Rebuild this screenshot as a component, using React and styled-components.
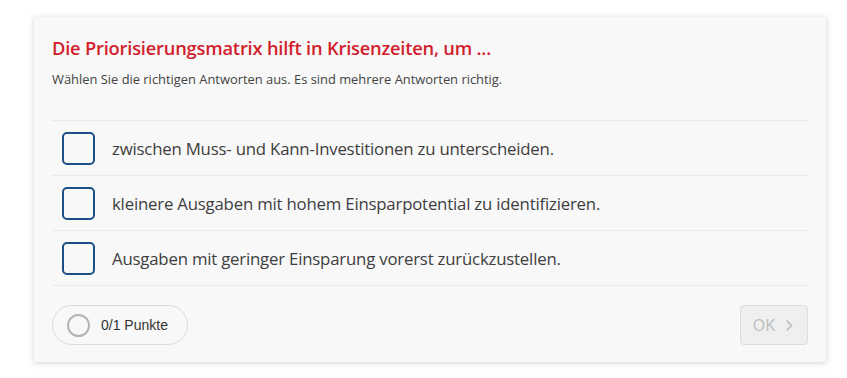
import React from 'react';
import styled, { createGlobalStyle } from 'styled-components';

const GlobalStyle = createGlobalStyle`
  html, body {
    margin: 0;
    padding: 0;
    background: #ffffff;
  }
  * { box-sizing: border-box; }
`;

const Page = styled.div`
  padding: 17px 21px 16px 34px;
`;

const Card = styled.div`
  background: #f8f8f8;
  box-shadow: 0 1px 6px rgba(0, 0, 0, 0.18);
  padding: 20px 18px 17px 18px;
  font-family: 'Open Sans', 'Noto Sans', sans-serif;
`;

const Title = styled.h2`
  margin: 0;
  font-size: 18.3px;
  font-weight: 600;
  color: #d2202b;
  line-height: 22px;
  letter-spacing: -0.2px;
`;

const Hint = styled.p`
  margin: 12px 0 0 0;
  font-size: 12.9px;
  color: #444;
  line-height: 16px;
`;

const Options = styled.ul`
  list-style: none;
  margin: 33px 0 0 0;
  padding: 0;
  border-top: 1px solid #e9e9e9;
`;

const Option = styled.li`
  display: flex;
  align-items: center;
  gap: 17px;
  height: 55px;
  padding-left: 10px;
  border-bottom: 1px solid #e9e9e9;
`;

const Box = styled.span`
  width: 33px;
  height: 33px;
  border: 2px solid #1b4f86;
  border-radius: 5px;
  background: #f8f8f8;
  flex-shrink: 0;
`;

const Label = styled.span`
  font-size: 16.8px;
  color: #3e3e3e;
  letter-spacing: -0.2px;
`;

const Footer = styled.div`
  display: flex;
  justify-content: space-between;
  align-items: center;
  margin-top: 19px;
`;

const Score = styled.div`
  display: flex;
  align-items: center;
  gap: 11px;
  height: 40px;
  padding: 0 19px 0 14px;
  border: 1px solid #dcdcdc;
  border-radius: 20px;
  font-family: 'Liberation Sans', Arial, sans-serif;
  font-size: 14px;
  color: #333;
`;

const Ring = styled.span`
  width: 23px;
  height: 23px;
  border-radius: 50%;
  border: 2px solid #b3b3b3;
`;

const OkButton = styled.button`
  display: flex;
  align-items: center;
  gap: 10px;
  height: 40px;
  padding: 0 14px 0 12px;
  border: 1px solid #dcdcdc;
  border-radius: 4px;
  background: #efefef;
  color: #bcbcbc;
  font-family: 'Open Sans', sans-serif;
  font-size: 16px;
  cursor: default;
`;

const options = [
  'zwischen Muss- und Kann-Investitionen zu unterscheiden.',
  'kleinere Ausgaben mit hohem Einsparpotential zu identifizieren.',
  'Ausgaben mit geringer Einsparung vorerst zurückzustellen.',
];

const App = () => {
  return (
    <Page>
      <GlobalStyle />
      <Card>
        <Title>Die Priorisierungsmatrix hilft in Krisenzeiten, um ...</Title>
        <Hint>Wählen Sie die richtigen Antworten aus. Es sind mehrere Antworten richtig.</Hint>
        <Options>
          {options.map((text, i) => (
            <Option key={i}>
              <Box />
              <Label>{text}</Label>
            </Option>
          ))}
        </Options>
        <Footer>
          <Score>
            <Ring />
            0/1 Punkte
          </Score>
          <OkButton>
            OK
            <svg width="8" height="13" viewBox="0 0 8 13">
              <path d="M1.5 1.5 L6.5 6.5 L1.5 11.5" fill="none" stroke="#bcbcbc" strokeWidth="1.5" />
            </svg>
          </OkButton>
        </Footer>
      </Card>
    </Page>
  );
};

export default App;
